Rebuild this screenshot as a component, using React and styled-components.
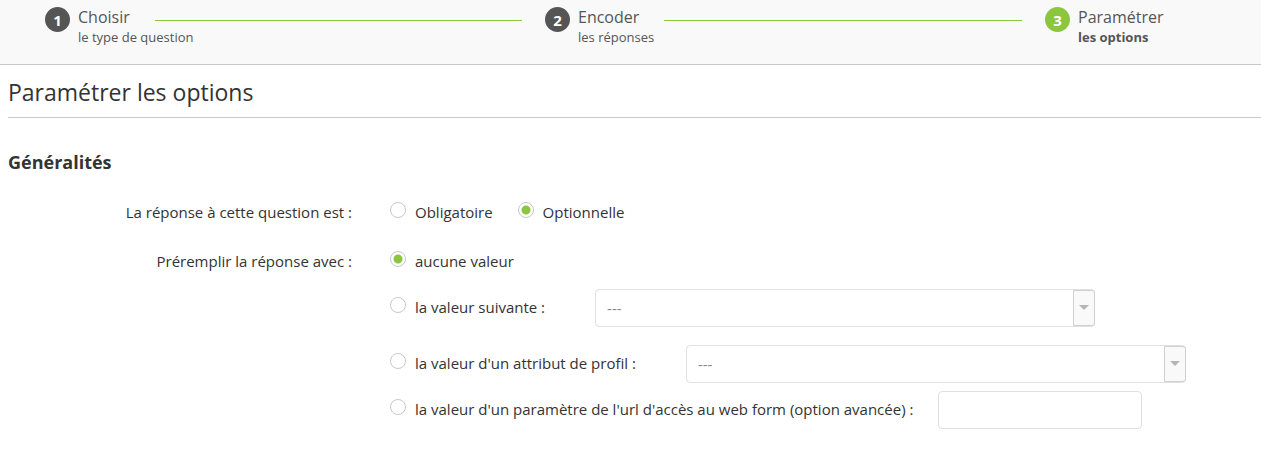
import { useState } from 'react'
import styled, { createGlobalStyle } from 'styled-components'

const GlobalStyle = createGlobalStyle`
  *,
  *::before {
    box-sizing: border-box;
  }

  body {
    margin: 0;
    background: #fff;
    color: #333;
    font-family: 'Open Sans', 'Noto Sans', sans-serif;
    font-size: 15px;
    line-height: 20px;
  }
`

const Steps = styled.ol`
  display: flex;
  margin: 0;
  padding: 7px 0 18px 45px;
  list-style: none;
  background: #f9f9f9;
  border-bottom: 1px solid #c8c8c8;
`

const Step = styled.li`
  display: flex;
  gap: 8px;
  flex: ${props => (props.$last ? '0 0 216px' : '1')};
  color: #555;
`

const StepNumber = styled.span`
  flex: none;
  width: 25px;
  height: 25px;
  border-radius: 50%;
  background: ${props => (props.$active ? '#8cc63f' : '#555')};
  color: #fff;
  font-weight: 700;
  line-height: 26px;
  text-align: center;
`

const StepBody = styled.div`
  flex: 1;
`

const StepHead = styled.div`
  display: flex;
  align-items: center;
  gap: 25px;
  padding-right: 23px;
  font-size: 16px;
  line-height: 21px;

  &::after {
    content: '';
    flex: 1;
    height: ${props => (props.$last ? '0' : '1px')};
    margin-top: 6px;
    background: #8cc63f;
  }
`

const StepText = styled.div`
  font-size: 13px;
  line-height: 18px;
  font-weight: ${props => (props.$active ? 700 : 400)};
`

const Content = styled.main`
  padding-left: 8px;
`

const PageTitle = styled.h1`
  margin: 0 0 32px;
  padding: 11px 0 9px;
  border-bottom: 1px solid #c8c8c8;
  font-size: 23px;
  font-weight: 400;
  line-height: 32px;
`

const SectionTitle = styled.h2`
  margin: 0 0 28px;
  font-size: 18px;
  line-height: 24px;
`

const FormRow = styled.div`
  display: grid;
  grid-template-columns: 344px 1fr;
  column-gap: 38px;
  margin-bottom: 29px;
`

const RowLabel = styled.div`
  text-align: right;
`

const Inline = styled.div`
  display: flex;
  gap: 25px;
`

const Choice = styled.label`
  display: flex;
  flex: none;
  gap: 9px;
`

const Radio = styled.input.attrs({ type: 'radio' })`
  appearance: none;
  flex: none;
  width: 16px;
  height: 16px;
  margin: 0;
  border: 1px solid #c8c8c8;
  border-radius: 50%;
  background: #fff;

  &:checked {
    background: radial-gradient(circle, #8cc63f 4px, #fff 5px);
  }
`

const ChoiceLine = styled.div`
  display: flex;
  gap: ${props => (props.$compact ? '25px' : '50px')};
  margin-top: ${props => (props.$compact ? '8px' : '18px')};

  ${Choice} {
    padding-top: 8px;
  }
`

const SelectBox = styled.div`
  position: relative;
  flex: 0 1 500px;

  &::before {
    content: '';
    position: absolute;
    top: 1px;
    right: 0;
    bottom: 1px;
    width: 22px;
    border: 1px solid #d0d0d0;
    border-radius: 0 3px 3px 0;
    background: #f9f9f9;
    pointer-events: none;
  }

  &::after {
    content: '';
    position: absolute;
    top: 16px;
    right: 6px;
    border: 5px solid transparent;
    border-top-color: #b5b5b8;
    border-bottom: 0;
    pointer-events: none;
  }
`

const Select = styled.select`
  appearance: none;
  display: block;
  width: 100%;
  height: 38px;
  padding: 0 34px 0 11px;
  border: 1px solid #e0e0e0;
  border-radius: 4px;
  background: #fff;
  color: #888;
  font: inherit;
  font-size: 15px;
`

const TextInput = styled.input.attrs({ type: 'text' })`
  width: 204px;
  height: 38px;
  padding: 0 11px;
  border: 1px solid #e0e0e0;
  border-radius: 4px;
  font: inherit;
`

const steps = [
  { title: 'Choisir', text: 'le type de question' },
  { title: 'Encoder', text: 'les réponses' },
  { title: 'Paramétrer', text: 'les options' }
]

const App = () => {
  const [required, setRequired] = useState('optional')
  const [prefill, setPrefill] = useState('none')

  const requiredRadio = value => (
    <Radio name="required" checked={required === value} onChange={() => setRequired(value)} />
  )
  const prefillRadio = value => (
    <Radio name="prefill" checked={prefill === value} onChange={() => setPrefill(value)} />
  )

  return (
    <>
      <GlobalStyle />
      <Steps>
        {steps.map((step, index) => {
          const last = index === steps.length - 1
          return (
            <Step key={step.title} $last={last}>
              <StepNumber $active={last}>{index + 1}</StepNumber>
              <StepBody>
                <StepHead $last={last}>{step.title}</StepHead>
                <StepText $active={last}>{step.text}</StepText>
              </StepBody>
            </Step>
          )
        })}
      </Steps>

      <Content>
        <PageTitle>Paramétrer les options</PageTitle>
        <SectionTitle>Généralités</SectionTitle>

        <FormRow role="radiogroup" aria-labelledby="required-label">
          <RowLabel id="required-label">La réponse à cette question est :</RowLabel>
          <Inline>
            <Choice>{requiredRadio('mandatory')}Obligatoire</Choice>
            <Choice>{requiredRadio('optional')}Optionnelle</Choice>
          </Inline>
        </FormRow>

        <FormRow role="radiogroup" aria-labelledby="prefill-label">
          <RowLabel id="prefill-label">Préremplir la réponse avec :</RowLabel>
          <div>
            <Choice>{prefillRadio('none')}aucune valeur</Choice>

            <ChoiceLine>
              <Choice id="value-label">{prefillRadio('value')}la valeur suivante :</Choice>
              <SelectBox>
                <Select aria-labelledby="value-label">
                  <option>---</option>
                </Select>
              </SelectBox>
            </ChoiceLine>

            <ChoiceLine>
              <Choice id="profile-label">{prefillRadio('profile')}la valeur d'un attribut de profil :</Choice>
              <SelectBox>
                <Select aria-labelledby="profile-label">
                  <option>---</option>
                </Select>
              </SelectBox>
            </ChoiceLine>

            <ChoiceLine $compact>
              <Choice id="url-label">
                {prefillRadio('url')}la valeur d'un paramètre de l'url d'accès au web form (option avancée) :
              </Choice>
              <TextInput aria-labelledby="url-label" />
            </ChoiceLine>
          </div>
        </FormRow>
      </Content>
    </>
  )
}

export default App
